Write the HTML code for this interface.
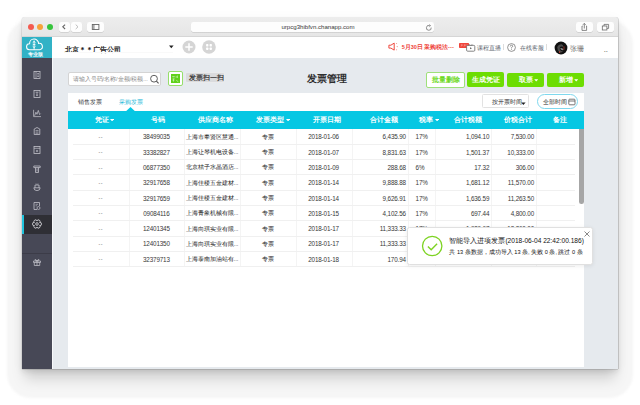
<!DOCTYPE html><html><head><meta charset="utf-8"><style>
*{box-sizing:border-box;margin:0;padding:0}
html,body{width:640px;height:405px;overflow:hidden;background:#fff;font-family:"Liberation Sans",sans-serif;color:#333}
.a{position:absolute}
.t{position:absolute;white-space:nowrap;line-height:1}
#win{left:22px;top:17px;width:596px;height:352px;border-radius:3px 3px 0 0;box-shadow:0 13px 13px -3px rgba(0,0,0,0.15),0 3px 5px rgba(0,0,0,0.08),0 2px 14px rgba(0,0,0,0.035),0.7px 0 0 rgba(0,0,0,0.2),-0.5px 0 0 rgba(0,0,0,0.12),0 0.7px 0 rgba(0,0,0,0.15);background:#e6eaee;overflow:hidden}
#tb{left:0;top:0;width:596px;height:19.5px;background:linear-gradient(#ededed,#e6e6e6);border-bottom:1px solid #d6d6d6}
.dot{position:absolute;width:6px;height:6px;border-radius:50%;top:6.8px}
.tbtn{position:absolute;background:#fdfdfd;border-radius:2px;box-shadow:0 0.5px 0.5px rgba(0,0,0,0.18)}
#side{left:0;top:19.5px;width:30px;height:333px;background:#474856}
#logo{left:0;top:0;width:30px;height:21.5px;background:#31b2c6}
#hdr{left:30px;top:19.5px;width:566px;height:21.5px;background:#fff}
.btn{position:absolute;background:#6fd21c;border-radius:2px;color:#fff;font-size:6px;text-align:center;top:55px;height:15.5px;line-height:15.5px;font-weight:bold}
#panel{left:46px;top:75.5px;width:516px;height:274.5px;background:#fff}
#thead{left:0;top:18.2px;width:516px;height:18px;background:#06c7e3}
.th{position:absolute;color:#fff;font-size:6.6px;font-weight:bold;top:6px;white-space:nowrap;line-height:1}
.hl{position:absolute;left:5px;width:502px;height:1px;background:#f0f0f0}
.vl{position:absolute;width:1px;background:#f4f4f4;top:36.2px;height:138.3px}
.td{position:absolute;font-size:6.3px;letter-spacing:-0.15px;color:#383838;white-space:nowrap;line-height:1}
.ico{position:absolute}
</style></head><body>
<div class="a" style="left:7px;top:20px;width:626px;height:377.5px;border-radius:24px;background:#f6f6f6;filter:blur(1px)"></div>
<div id="win" class="a">
<div id="tb" class="a">
<div class="dot" style="left:6px;background:#f45b50"></div>
<div class="dot" style="left:15.3px;background:#f6a23a"></div>
<div class="dot" style="left:24.6px;background:#36c43c"></div>
<div class="tbtn" style="left:36.75px;top:5.25px;width:11px;height:9.6px"></div>
<div class="tbtn" style="left:48.6px;top:5.25px;width:11px;height:9.6px"></div>
<div class="tbtn" style="left:64.9px;top:5.25px;width:16.8px;height:9.6px"></div>
<div class="tbtn" style="left:169.25px;top:5.25px;width:242.75px;height:9.6px"></div>
<div class="tbtn" style="left:554.2px;top:5px;width:16.6px;height:10.2px"></div>
<div class="tbtn" style="left:575.2px;top:5px;width:16.6px;height:10.2px"></div>
<svg class="ico" style="left:36.75px;top:5.25px" width="11" height="10" viewBox="0 0 11 10"><path d="M6.1 2.6 L3.8 4.8 L6.1 7.0" fill="none" stroke="#666" stroke-width="1.1"/></svg>
<svg class="ico" style="left:48.6px;top:5.25px" width="11" height="10" viewBox="0 0 11 10"><path d="M4.7 2.6 L7.0 4.8 L4.7 7.0" fill="none" stroke="#bdbdbd" stroke-width="1"/></svg>
<svg class="ico" style="left:64.9px;top:5.25px" width="17" height="10" viewBox="0 0 17 10"><rect x="5.3" y="2.5" width="6.6" height="5" fill="none" stroke="#666" stroke-width="0.9"/><path d="M6.9 2.5 V7.5" stroke="#666" stroke-width="0.9"/></svg>
<div class="t" style="left:204.5px;top:6.9px;width:183px;text-align:center;font-size:6.1px;color:#3a3a3a">urpcg3hibfvn.chanapp.com</div>
<svg class="ico" style="left:403px;top:6.5px" width="8" height="8" viewBox="0 0 8 8"><path d="M6.2 3.6 A2.4 2.4 0 1 1 4.6 1.6" fill="none" stroke="#707070" stroke-width="0.8"/><path d="M4 0.6 L5.6 1.6 L4.3 2.8" fill="none" stroke="#707070" stroke-width="0.7"/></svg>
<svg class="ico" style="left:554.2px;top:5px" width="17" height="10" viewBox="0 0 17 10"><path d="M6.6 4 H6 V8.4 H10.6 V4 H10" fill="none" stroke="#6a6a6a" stroke-width="0.8"/><path d="M8.3 6.5 V1.5 M6.9 2.8 L8.3 1.4 L9.7 2.8" fill="none" stroke="#6a6a6a" stroke-width="0.8"/></svg>
<svg class="ico" style="left:575.2px;top:5px" width="17" height="10" viewBox="0 0 17 10"><rect x="5.3" y="4" width="4.6" height="4" fill="none" stroke="#6a6a6a" stroke-width="0.8"/><path d="M7 4 V2.4 H11.6 V6.4 H9.9" fill="none" stroke="#6a6a6a" stroke-width="0.8"/></svg>
</div>
<div id="side" class="a"><div id="logo" class="a"></div></div>
<svg class="ico" style="left:3px;top:21.1px" width="20" height="14" viewBox="0 0 20 14"><path d="M4.5 11.7 A3 3 0 0 1 4.6 5.7 A4.5 4.5 0 0 1 13.6 5.4 A3.15 3.15 0 0 1 14.8 11.7 Z" fill="none" stroke="#fff" stroke-width="1.05"/><path d="M9.1 2.6 V11.7 M7.7 4.7 L9.1 3.4 L10.5 4.7 M7.8 6.6 H10.4 M7.7 8.3 L9.1 9.6 L10.5 8.3" fill="none" stroke="#fff" stroke-width="0.9"/></svg>
<div class="t" style="left:5.8px;top:36px;font-size:4.6px;color:#fff;font-weight:bold">专业版</div>
<svg class="ico" style="left:10px;top:53.00px" width="10" height="10" viewBox="0 0 10 10"><rect x="2" y="1.5" width="6" height="7" fill="none" stroke="#c2c2ca" stroke-width="0.8"/><path d="M4 1.5 V8.5 M5.2 3.5 H7 M5.2 5 H7 M5.2 6.5 H7" stroke="#c2c2ca" stroke-width="0.7"/></svg>
<svg class="ico" style="left:10px;top:71.70px" width="10" height="10" viewBox="0 0 10 10"><rect x="2" y="1.5" width="6" height="7" fill="none" stroke="#c2c2ca" stroke-width="0.8"/><path d="M3.5 3.2 H6.5 M5 3.2 V7 M4 6.2 H6" stroke="#c2c2ca" stroke-width="0.7"/></svg>
<svg class="ico" style="left:10px;top:90.50px" width="10" height="10" viewBox="0 0 10 10"><path d="M1.6 1.8 V8.6 H9" fill="none" stroke="#c2c2ca" stroke-width="0.75"/><path d="M2.6 7.8 L3.9 4.2 L5 6.3 L6.3 2.4 L7.6 6.6 L8.6 5.6" fill="none" stroke="#c2c2ca" stroke-width="0.75" stroke-linejoin="round"/></svg>
<svg class="ico" style="left:10px;top:109.30px" width="10" height="10" viewBox="0 0 10 10"><path d="M2.2 8.5 V3 L5 1.5 L7.8 3 V8.5 Z" fill="none" stroke="#c2c2ca" stroke-width="0.8"/><path d="M3.5 4.5 H6.5 M3.5 6 H6.5 M3.5 7.3 H6.5" stroke="#c2c2ca" stroke-width="0.6"/></svg>
<svg class="ico" style="left:10px;top:128.00px" width="10" height="10" viewBox="0 0 10 10"><rect x="2" y="1.5" width="6" height="7" fill="none" stroke="#c2c2ca" stroke-width="0.8"/><path d="M2 3.3 H8 M4.4 5.4 H5.6 V6.6 H4.4 Z" fill="none" stroke="#c2c2ca" stroke-width="0.7"/></svg>
<svg class="ico" style="left:10px;top:146.60px" width="10" height="10" viewBox="0 0 10 10"><path d="M1.8 2 H8.2 V3.6 H1.8 Z M3.5 3.6 V8.5 H6.5 V3.6" fill="none" stroke="#c2c2ca" stroke-width="0.8"/><path d="M5 4.5 V7.5" stroke="#c2c2ca" stroke-width="0.7"/></svg>
<svg class="ico" style="left:10px;top:165.00px" width="10" height="10" viewBox="0 0 10 10"><path d="M1.8 5.8 H8.2 Q8 8.6 5 8.6 Q2 8.6 1.8 5.8 Z M3 5.8 V3 H7 V5.8" fill="none" stroke="#c2c2ca" stroke-width="0.8"/><path d="M4 1.5 L5 2.5 L6 1.5" fill="none" stroke="#c2c2ca" stroke-width="0.6"/></svg>
<svg class="ico" style="left:10px;top:183.50px" width="10" height="10" viewBox="0 0 10 10"><path d="M7.5 5 V1.5 H2 V8.5 H5" fill="none" stroke="#c2c2ca" stroke-width="0.8"/><path d="M3.5 3.3 H6 M3.5 4.8 H5" stroke="#c2c2ca" stroke-width="0.6"/><circle cx="6.5" cy="7" r="1.5" fill="none" stroke="#c2c2ca" stroke-width="0.7"/></svg>
<div class="a" style="left:0;top:197.7px;width:30px;height:19.3px;background:#2f2f35"></div>
<div class="a" style="left:0;top:197.7px;width:1.6px;height:19.3px;background:#20c4dd"></div>
<svg class="ico" style="left:10px;top:202px" width="10" height="10" viewBox="0 0 10 10"><path d="M7.60 3.50 A1.55 1.55 0 1 1 7.60 6.50 A1.55 1.55 0 1 1 5.00 8.00 A1.55 1.55 0 1 1 2.40 6.50 A1.55 1.55 0 1 1 2.40 3.50 A1.55 1.55 0 1 1 5.00 2.00 A1.55 1.55 0 1 1 7.60 3.50 Z" fill="none" stroke="#e8e8ec" stroke-width="0.75"/><circle cx="5" cy="5" r="1.3" fill="none" stroke="#e8e8ec" stroke-width="0.75"/></svg>
<div class="a" style="left:0;top:235.5px;width:30px;height:1px;background:#3c3c48"></div>
<svg class="ico" style="left:10px;top:240px" width="10" height="10" viewBox="0 0 10 10"><path d="M1.5 4 H8.5 V5.5 H1.5 Z M2.3 5.5 V8.5 H7.7 V5.5 M5 4 V8.5 M5 4 Q3 1 2.8 3 Q3 4 5 4 Q7 4 7.2 3 Q7 1 5 4" fill="none" stroke="#c2c2ca" stroke-width="0.75"/></svg>
<div id="hdr" class="a"></div>
<div class="a" style="left:30px;top:41px;width:1px;height:311px;background:#f7f8fa"></div>
<div class="t" style="left:43px;top:28.7px;font-size:7px;color:#222;font-weight:600">北京＊＊广告公司</div>
<svg class="ico" style="left:146.8px;top:27.7px" width="5" height="4" viewBox="0 0 5 4"><path d="M0 0.5 H4.6 L2.3 3.2 Z" fill="#222"/></svg>
<div class="a" style="left:43px;top:35.2px;width:108px;height:0.6px;background:#f9f9f9"></div>
<svg class="ico" style="left:160px;top:23.2px" width="14" height="14" viewBox="0 0 14 14"><circle cx="7" cy="7" r="6.5" fill="#d5d5d5"/><path d="M7 3.3 V10.7 M3.3 7 H10.7" stroke="#fff" stroke-width="1.5"/></svg>
<svg class="ico" style="left:180px;top:23.2px" width="14" height="14" viewBox="0 0 14 14"><circle cx="7" cy="7" r="6.8" fill="#d5d5d5"/><rect x="4.1" y="4.1" width="2.3" height="2.3" rx="0.6" fill="#fff"/><rect x="7.6" y="4.1" width="2.3" height="2.3" rx="0.6" fill="#fff"/><rect x="4.1" y="7.6" width="2.3" height="2.3" rx="0.6" fill="#fff"/><rect x="7.6" y="7.6" width="2.3" height="2.3" rx="0.6" fill="#fff"/></svg>
<svg class="ico" style="left:365.5px;top:25.2px" width="12" height="10" viewBox="0 0 12 10"><path d="M0.9 3.2 H2.9 L6.2 1.1 V8.1 L2.9 6.1 H0.9 Z" fill="none" stroke="#ee4036" stroke-width="0.95" stroke-linejoin="round"/><circle cx="8.6" cy="1.5" r="0.55" fill="#f38a80"/><circle cx="9.2" cy="4.6" r="0.6" fill="#f38a80"/><circle cx="8.6" cy="7.7" r="0.55" fill="#f38a80"/></svg>
<div class="t" style="left:379.7px;top:28.3px;font-size:5.5px;color:#ee4036;font-weight:600">5月30日 采购税法⋯</div>
<div class="a" style="left:437.1px;top:25.9px;width:9.8px;height:4.9px;background:#f0453b;border-radius:0.8px"></div>
<svg class="ico" style="left:437.1px;top:25.9px" width="10" height="5" viewBox="0 0 10 5"><path d="M1.8 2 H3.6 M4.8 2 H6.6 M7.6 2 H8.6 M2.2 3.4 L2.8 2.6 M5.2 3.4 L5.8 2.6" stroke="#fde3e0" stroke-width="0.6"/></svg>
<svg class="ico" style="left:444px;top:26.9px" width="10" height="8" viewBox="0 0 10 8"><rect x="0.6" y="1.4" width="8.2" height="5.8" rx="1" fill="#fff" stroke="#666" stroke-width="0.8"/><path d="M4 3.3 L6 4.3 L4 5.3 Z" fill="#666"/><path d="M3 0.3 L4.5 1.4 M6.5 0.3 L5 1.4" stroke="#666" stroke-width="0.6"/></svg>
<div class="t" style="left:455.2px;top:28.5px;font-size:5.5px;color:#58606a;font-weight:400">课程直播</div>
<div class="a" style="left:481px;top:27px;width:0.6px;height:6px;background:#ddd"></div>
<svg class="ico" style="left:484.5px;top:25.5px" width="9" height="9" viewBox="0 0 9 9"><circle cx="4.5" cy="4.5" r="3.9" fill="none" stroke="#666" stroke-width="0.7"/><path d="M3.3 3.5 Q3.3 2.2 4.5 2.2 Q5.7 2.2 5.7 3.3 Q5.7 4 4.5 4.6 V5.4" fill="none" stroke="#666" stroke-width="0.7"/><circle cx="4.5" cy="6.5" r="0.45" fill="#666"/></svg>
<div class="t" style="left:498.3px;top:28.5px;font-size:5.5px;color:#58606a;font-weight:400">在线客服</div>
<div class="a" style="left:523.6px;top:27px;width:0.6px;height:6px;background:#ddd"></div>
<svg class="ico" style="left:531.5px;top:23.6px" width="14" height="14" viewBox="0 0 14 14"><circle cx="7" cy="7" r="6.4" fill="#111"/><path d="M3.2 6 Q4.5 3 7.5 3.2 Q9.5 3.6 9.2 6 Q8.4 5 6.8 5.6 Q5.4 6.2 5.8 8.6 Q6.6 10.6 9 10.2 Q7.6 12 5.4 11.4 Q3.2 9.6 3.2 6Z" fill="#4a4a4a"/><path d="M6.2 7.6 Q7.4 9.6 9.6 9 Q9 7 7.2 7 Z" fill="#8a8a8a"/><path d="M9.3 6.1 H10.6 M9.3 7.9 H10.6 M5.6 10.4 V12" stroke="#e8402f" stroke-width="0.75"/></svg>
<div class="t" style="left:548px;top:27.5px;font-size:7px;color:#666">张珊</div>
<div class="t" style="left:582px;top:29.6px;font-size:6px;color:#666;font-weight:bold;letter-spacing:0.3px">..</div>
<div class="a" style="left:46.4px;top:54.9px;width:93px;height:14px;background:#fff;border:0.8px solid #d4d4d4;border-radius:2px"></div>
<div class="t" style="left:50.6px;top:59.7px;font-size:5.5px;color:#8a8a8a">请输入号码/名称/金额/税额...</div>
<svg class="ico" style="left:127px;top:56.5px" width="11" height="11" viewBox="0 0 11 11"><circle cx="5" cy="4.7" r="3.4" fill="none" stroke="#555" stroke-width="0.95"/><path d="M7.4 7.1 L9.6 9.4" stroke="#555" stroke-width="1.1"/></svg>
<div class="a" style="left:145.9px;top:54.2px;width:15px;height:14.6px;border:0.8px solid #96df6a;border-radius:2px;background:#fff"></div>
<svg class="ico" style="left:149.2px;top:57.4px" width="9" height="9" viewBox="0 0 9 9"><rect x="0" y="0" width="9" height="9" fill="#5fd11a"/><path d="M1.3 2.5 H3.7 M1.6 4.2 H3.6 M5.2 2.2 V3.7 M6.4 1.6 V4 M1.4 6 H3.5 M2.5 5.2 V7.6 M5.3 6.3 L7.4 7.8" stroke="#e8f9df" stroke-width="0.6"/></svg>
<div class="a" style="left:163.5px;top:55.6px;width:38.3px;height:9.6px;background:#dadbdd;border-radius:1px;box-shadow:0 0 0 0.7px #ececec"></div>
<div class="t" style="left:166.8px;top:57.2px;font-size:7px;color:#3a3a3a;font-weight:600">发票扫一扫</div>
<div class="t" style="left:285.3px;top:56.6px;font-size:9.9px;color:#2e2e2e;font-weight:bold">发票管理</div>
<div class="a" style="left:404px;top:55px;width:39.2px;height:15.9px;border:0.9px solid #9ee07a;border-radius:2px;background:#fff"></div>
<div class="t" style="left:410.2px;top:59.6px;font-size:6.6px;color:#6bd820;font-weight:bold">批量删除</div>
<div class="a" style="left:444.9px;top:55.3px;width:37.5px;height:15.2px;background:#6ddd02;border-radius:2px"></div>
<div class="t" style="left:450.3px;top:59.7px;font-size:6.6px;color:#fff;font-weight:bold">生成凭证</div>
<div class="a" style="left:485.0px;top:55.6px;width:37px;height:14.9px;background:#6ddd02;border-radius:2px"></div>
<div class="t" style="left:497.0px;top:59.7px;font-size:6.5px;color:#fff;font-weight:bold">取票</div>
<svg class="ico" style="left:511.8px;top:62px" width="5" height="3" viewBox="0 0 5 3"><path d="M0.2 0.2 H4.2 L2.2 2.6 Z" fill="#fff"/></svg>
<div class="a" style="left:524.9px;top:55.6px;width:37px;height:14.9px;background:#6ddd02;border-radius:2px"></div>
<div class="t" style="left:537.0px;top:59.7px;font-size:6.5px;color:#fff;font-weight:bold">新增</div>
<svg class="ico" style="left:551.8px;top:62px" width="5" height="3" viewBox="0 0 5 3"><path d="M0.2 0.2 H4.2 L2.2 2.6 Z" fill="#fff"/></svg>
<div id="panel" class="a">
<div class="t" style="left:9.8px;top:7px;font-size:5.6px;color:#333;font-weight:500">销售发票</div>
<div class="t" style="left:50.9px;top:7px;font-size:5.6px;color:#1db8d8;font-weight:500">采购发票</div>
<div class="a" style="left:414px;top:1.8px;width:47.2px;height:14.1px;border:0.7px solid #e2e2e2;border-radius:1.5px"></div>
<div class="t" style="left:423.5px;top:7px;font-size:5.6px;color:#2a2a2a;font-weight:400">按开票时间</div>
<svg class="ico" style="left:452.5px;top:9px" width="5" height="4" viewBox="0 0 5 4"><path d="M0.2 0.4 H4.6 L2.4 3 Z" fill="#222"/></svg>
<div class="a" style="left:469px;top:1.2px;width:41.3px;height:15.1px;border:0.8px solid #7fd8ee;border-radius:7.5px"></div>
<div class="t" style="left:475px;top:7.1px;font-size:5.5px;color:#2a2a2a;font-weight:400">全部时间</div>
<svg class="ico" style="left:499.8px;top:5.4px" width="8" height="8" viewBox="0 0 8 8"><rect x="0.8" y="1.2" width="6.2" height="5.6" rx="0.8" fill="none" stroke="#555" stroke-width="0.8"/><path d="M0.8 3 H7" stroke="#555" stroke-width="0.8"/></svg>
<div id="thead" class="a"></div>
<svg class="ico" style="left:57.5px;top:14.2px" width="9" height="5" viewBox="0 0 9 5"><path d="M0 4.2 L4.5 0 L9 4.2 Z" fill="#06c7e3"/></svg>
<div class="th" style="left:26.5px;top:24.2px">凭证<svg style="display:inline-block;margin-left:1.8px;vertical-align:0.6px" width="4.2" height="2.4" viewBox="0 0 4.2 2.4"><path d="M0 0 H4.2 L2.1 2.4 Z" fill="#fff"/></svg></div>
<div class="th" style="left:82.7px;top:24.2px">号码</div>
<div class="th" style="left:130.1px;top:24.2px">供应商名称</div>
<div class="th" style="left:188.4px;top:24.2px">发票类型<svg style="display:inline-block;margin-left:1.8px;vertical-align:0.6px" width="4.2" height="2.4" viewBox="0 0 4.2 2.4"><path d="M0 0 H4.2 L2.1 2.4 Z" fill="#fff"/></svg></div>
<div class="th" style="left:245.2px;top:24.2px">开票日期</div>
<div class="th" style="left:301.7px;top:24.2px">合计金额</div>
<div class="th" style="left:351.0px;top:24.2px">税率<svg style="display:inline-block;margin-left:1.8px;vertical-align:0.6px" width="4.2" height="2.4" viewBox="0 0 4.2 2.4"><path d="M0 0 H4.2 L2.1 2.4 Z" fill="#fff"/></svg></div>
<div class="th" style="left:385.5px;top:24.2px">合计税额</div>
<div class="th" style="left:436.1px;top:24.2px">价税合计</div>
<div class="th" style="left:484.5px;top:24.2px">备注</div>
<div class="vl" style="left:60.5px"></div>
<div class="vl" style="left:116.3px"></div>
<div class="vl" style="left:172.1px"></div>
<div class="vl" style="left:227.5px"></div>
<div class="vl" style="left:283.6px"></div>
<div class="vl" style="left:339.9px"></div>
<div class="vl" style="left:367.4px"></div>
<div class="vl" style="left:423.0px"></div>
<div class="vl" style="left:467.7px"></div>
<div class="hl" style="top:51.30px"></div>
<div class="td" style="left:5px;width:55.5px;text-align:center;top:42.40px;font-size:5.2px;color:#666;letter-spacing:0.5px">--</div>
<div class="td" style="left:60.5px;width:55.8px;text-align:center;top:41.80px">38499035</div>
<div class="td" style="left:117.6px;top:42.30px;font-size:5.7px;letter-spacing:0;color:#222;font-weight:400">上海市奉贤区慧通...</div>
<div class="td" style="left:172.6px;width:55.4px;text-align:center;top:42.30px;font-size:5.7px;font-weight:400;color:#222;letter-spacing:0">专票</div>
<div class="td" style="left:227.5px;width:56.1px;text-align:center;top:41.80px">2018-01-06</div>
<div class="td" style="left:283.6px;width:54.3px;text-align:right;top:41.80px">6,435.90</div>
<div class="td" style="left:347.6px;top:41.80px">17%</div>
<div class="td" style="left:367.4px;width:53.9px;text-align:right;top:41.80px">1,094.10</div>
<div class="td" style="left:423px;width:43px;text-align:right;top:41.80px">7,530.00</div>
<div class="hl" style="top:66.61px"></div>
<div class="td" style="left:5px;width:55.5px;text-align:center;top:57.71px;font-size:5.2px;color:#666;letter-spacing:0.5px">--</div>
<div class="td" style="left:60.5px;width:55.8px;text-align:center;top:57.11px">33382827</div>
<div class="td" style="left:117.6px;top:57.61px;font-size:5.7px;letter-spacing:0;color:#222;font-weight:400">上海让琴机电设备...</div>
<div class="td" style="left:172.6px;width:55.4px;text-align:center;top:57.61px;font-size:5.7px;font-weight:400;color:#222;letter-spacing:0">专票</div>
<div class="td" style="left:227.5px;width:56.1px;text-align:center;top:57.11px">2018-01-07</div>
<div class="td" style="left:283.6px;width:54.3px;text-align:right;top:57.11px">8,831.63</div>
<div class="td" style="left:347.6px;top:57.11px">17%</div>
<div class="td" style="left:367.4px;width:53.9px;text-align:right;top:57.11px">1,501.37</div>
<div class="td" style="left:423px;width:43px;text-align:right;top:57.11px">10,333.00</div>
<div class="hl" style="top:81.92px"></div>
<div class="td" style="left:5px;width:55.5px;text-align:center;top:73.02px;font-size:5.2px;color:#666;letter-spacing:0.5px">--</div>
<div class="td" style="left:60.5px;width:55.8px;text-align:center;top:72.42px">06877350</div>
<div class="td" style="left:117.6px;top:72.92px;font-size:5.7px;letter-spacing:0;color:#222;font-weight:400">北京桔子水晶酒店...</div>
<div class="td" style="left:172.6px;width:55.4px;text-align:center;top:72.92px;font-size:5.7px;font-weight:400;color:#222;letter-spacing:0">专票</div>
<div class="td" style="left:227.5px;width:56.1px;text-align:center;top:72.42px">2018-01-09</div>
<div class="td" style="left:283.6px;width:54.3px;text-align:right;top:72.42px">288.68</div>
<div class="td" style="left:347.6px;top:72.42px">6%</div>
<div class="td" style="left:367.4px;width:53.9px;text-align:right;top:72.42px">17.32</div>
<div class="td" style="left:423px;width:43px;text-align:right;top:72.42px">306.00</div>
<div class="hl" style="top:97.23px"></div>
<div class="td" style="left:5px;width:55.5px;text-align:center;top:88.33px;font-size:5.2px;color:#666;letter-spacing:0.5px">--</div>
<div class="td" style="left:60.5px;width:55.8px;text-align:center;top:87.73px">32917658</div>
<div class="td" style="left:117.6px;top:88.23px;font-size:5.7px;letter-spacing:0;color:#222;font-weight:400">上海佳楼五金建材...</div>
<div class="td" style="left:172.6px;width:55.4px;text-align:center;top:88.23px;font-size:5.7px;font-weight:400;color:#222;letter-spacing:0">专票</div>
<div class="td" style="left:227.5px;width:56.1px;text-align:center;top:87.73px">2018-01-14</div>
<div class="td" style="left:283.6px;width:54.3px;text-align:right;top:87.73px">9,888.88</div>
<div class="td" style="left:347.6px;top:87.73px">17%</div>
<div class="td" style="left:367.4px;width:53.9px;text-align:right;top:87.73px">1,681.12</div>
<div class="td" style="left:423px;width:43px;text-align:right;top:87.73px">11,570.00</div>
<div class="hl" style="top:112.54px"></div>
<div class="td" style="left:5px;width:55.5px;text-align:center;top:103.64px;font-size:5.2px;color:#666;letter-spacing:0.5px">--</div>
<div class="td" style="left:60.5px;width:55.8px;text-align:center;top:103.04px">32917659</div>
<div class="td" style="left:117.6px;top:103.54px;font-size:5.7px;letter-spacing:0;color:#222;font-weight:400">上海佳楼五金建材...</div>
<div class="td" style="left:172.6px;width:55.4px;text-align:center;top:103.54px;font-size:5.7px;font-weight:400;color:#222;letter-spacing:0">专票</div>
<div class="td" style="left:227.5px;width:56.1px;text-align:center;top:103.04px">2018-01-14</div>
<div class="td" style="left:283.6px;width:54.3px;text-align:right;top:103.04px">9,626.91</div>
<div class="td" style="left:347.6px;top:103.04px">17%</div>
<div class="td" style="left:367.4px;width:53.9px;text-align:right;top:103.04px">1,636.59</div>
<div class="td" style="left:423px;width:43px;text-align:right;top:103.04px">11,263.50</div>
<div class="hl" style="top:127.85px"></div>
<div class="td" style="left:5px;width:55.5px;text-align:center;top:118.95px;font-size:5.2px;color:#666;letter-spacing:0.5px">--</div>
<div class="td" style="left:60.5px;width:55.8px;text-align:center;top:118.35px">09084116</div>
<div class="td" style="left:117.6px;top:118.85px;font-size:5.7px;letter-spacing:0;color:#222;font-weight:400">上海青象机械有限...</div>
<div class="td" style="left:172.6px;width:55.4px;text-align:center;top:118.85px;font-size:5.7px;font-weight:400;color:#222;letter-spacing:0">专票</div>
<div class="td" style="left:227.5px;width:56.1px;text-align:center;top:118.35px">2018-01-15</div>
<div class="td" style="left:283.6px;width:54.3px;text-align:right;top:118.35px">4,102.56</div>
<div class="td" style="left:347.6px;top:118.35px">17%</div>
<div class="td" style="left:367.4px;width:53.9px;text-align:right;top:118.35px">697.44</div>
<div class="td" style="left:423px;width:43px;text-align:right;top:118.35px">4,800.00</div>
<div class="hl" style="top:143.16px"></div>
<div class="td" style="left:5px;width:55.5px;text-align:center;top:134.26px;font-size:5.2px;color:#666;letter-spacing:0.5px">--</div>
<div class="td" style="left:60.5px;width:55.8px;text-align:center;top:133.66px">12401345</div>
<div class="td" style="left:117.6px;top:134.16px;font-size:5.7px;letter-spacing:0;color:#222;font-weight:400">上海向琪实业有限...</div>
<div class="td" style="left:172.6px;width:55.4px;text-align:center;top:134.16px;font-size:5.7px;font-weight:400;color:#222;letter-spacing:0">专票</div>
<div class="td" style="left:227.5px;width:56.1px;text-align:center;top:133.66px">2018-01-17</div>
<div class="td" style="left:283.6px;width:54.3px;text-align:right;top:133.66px">11,333.33</div>
<div class="td" style="left:347.6px;top:133.66px">17%</div>
<div class="td" style="left:367.4px;width:53.9px;text-align:right;top:133.66px">1,926.67</div>
<div class="td" style="left:423px;width:43px;text-align:right;top:133.66px">13,260.00</div>
<div class="hl" style="top:158.47px"></div>
<div class="td" style="left:5px;width:55.5px;text-align:center;top:149.57px;font-size:5.2px;color:#666;letter-spacing:0.5px">--</div>
<div class="td" style="left:60.5px;width:55.8px;text-align:center;top:148.97px">12401350</div>
<div class="td" style="left:117.6px;top:149.47px;font-size:5.7px;letter-spacing:0;color:#222;font-weight:400">上海向琪实业有限...</div>
<div class="td" style="left:172.6px;width:55.4px;text-align:center;top:149.47px;font-size:5.7px;font-weight:400;color:#222;letter-spacing:0">专票</div>
<div class="td" style="left:227.5px;width:56.1px;text-align:center;top:148.97px">2018-01-17</div>
<div class="td" style="left:283.6px;width:54.3px;text-align:right;top:148.97px">11,333.33</div>
<div class="td" style="left:347.6px;top:148.97px">17%</div>
<div class="td" style="left:367.4px;width:53.9px;text-align:right;top:148.97px">1,926.67</div>
<div class="td" style="left:423px;width:43px;text-align:right;top:148.97px">13,260.00</div>
<div class="hl" style="top:173.78px"></div>
<div class="td" style="left:5px;width:55.5px;text-align:center;top:164.88px;font-size:5.2px;color:#666;letter-spacing:0.5px">--</div>
<div class="td" style="left:60.5px;width:55.8px;text-align:center;top:164.28px">32379713</div>
<div class="td" style="left:117.6px;top:164.78px;font-size:5.7px;letter-spacing:0;color:#222;font-weight:400">上海泰南加油站有...</div>
<div class="td" style="left:172.6px;width:55.4px;text-align:center;top:164.78px;font-size:5.7px;font-weight:400;color:#222;letter-spacing:0">专票</div>
<div class="td" style="left:227.5px;width:56.1px;text-align:center;top:164.28px">2018-01-18</div>
<div class="td" style="left:283.6px;width:54.3px;text-align:right;top:164.28px">170.94</div>
<div class="td" style="left:347.6px;top:164.28px">17%</div>
<div class="td" style="left:367.4px;width:53.9px;text-align:right;top:164.28px">29.06</div>
<div class="td" style="left:423px;width:43px;text-align:right;top:164.28px">200.00</div>
<div class="a" style="left:511.2px;top:36.6px;width:4.6px;height:74.8px;background:#a6a6a6;border-radius:0 0 2.3px 2.3px"></div>
</div>
<div class="a" style="left:385px;top:210px;width:186px;height:38px;background:#fff;border:1px solid #e0e0e0;border-radius:2.5px;box-shadow:0 1px 4px rgba(0,0,0,0.08)"></div>
<svg class="ico" style="left:399px;top:217.8px" width="22" height="22" viewBox="0 0 22 22"><circle cx="11.2" cy="11" r="9.7" fill="none" stroke="#7dd322" stroke-width="1.3"/><path d="M6.9 11.6 L10.2 14.7 L16.1 8.8" fill="none" stroke="#7dd322" stroke-width="1.4"/></svg>
<div class="t" style="left:427.4px;top:220.9px;font-size:6.6px;color:#111">智能导入进项发票(2018-06-04 22:42:00.186)</div>
<div class="t" style="left:427.4px;top:233px;font-size:5.6px;color:#111">共 13 条数据，成功导入 13 条, 失败 0 条, 跳过 0 条</div>
<svg class="ico" style="left:562px;top:213.5px" width="6" height="6" viewBox="0 0 6 6"><path d="M0.5 0.5 L5.5 5.5 M5.5 0.5 L0.5 5.5" stroke="#555" stroke-width="0.7"/></svg>
</div>
</body></html>
